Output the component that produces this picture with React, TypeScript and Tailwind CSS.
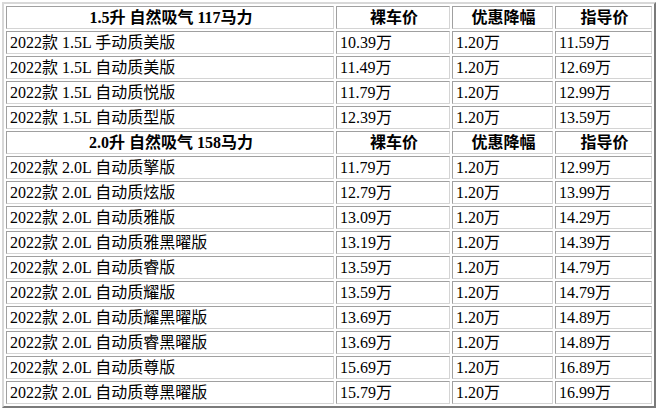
import { Fragment } from 'react';

const groups = [
  {
    title: '1.5升 自然吸气 117马力',
    rows: [
      ['2022款 1.5L 手动质美版', '10.39万', '1.20万', '11.59万'],
      ['2022款 1.5L 自动质美版', '11.49万', '1.20万', '12.69万'],
      ['2022款 1.5L 自动质悦版', '11.79万', '1.20万', '12.99万'],
      ['2022款 1.5L 自动质型版', '12.39万', '1.20万', '13.59万'],
    ],
  },
  {
    title: '2.0升 自然吸气 158马力',
    rows: [
      ['2022款 2.0L 自动质擎版', '11.79万', '1.20万', '12.99万'],
      ['2022款 2.0L 自动质炫版', '12.79万', '1.20万', '13.99万'],
      ['2022款 2.0L 自动质雅版', '13.09万', '1.20万', '14.29万'],
      ['2022款 2.0L 自动质雅黑曜版', '13.19万', '1.20万', '14.39万'],
      ['2022款 2.0L 自动质睿版', '13.59万', '1.20万', '14.79万'],
      ['2022款 2.0L 自动质耀版', '13.59万', '1.20万', '14.79万'],
      ['2022款 2.0L 自动质耀黑曜版', '13.69万', '1.20万', '14.89万'],
      ['2022款 2.0L 自动质睿黑曜版', '13.69万', '1.20万', '14.89万'],
      ['2022款 2.0L 自动质尊版', '15.69万', '1.20万', '16.89万'],
      ['2022款 2.0L 自动质尊黑曜版', '15.79万', '1.20万', '16.99万'],
    ],
  },
];

const cell =
  'h-[23px] border border-t-[#a0a0a0] border-l-[#a0a0a0] border-b-[#d4d4d4] border-r-[#d4d4d4] py-px pl-[3px] pr-px leading-[19px] whitespace-nowrap';

export default function App() {
  return (
    <div className="bg-white p-[2px] text-[16px] text-black [font-family:'Liberation_Serif','Noto_Sans_CJK_SC',serif]">
      <table className="table-fixed w-[654px] border-separate border-spacing-[2px] border-2 border-t-[#d8d8d8] border-l-[#d8d8d8] border-b-[#7a7a7a] border-r-[#7a7a7a]">
        <colgroup>
          <col className="w-[328px]" />
          <col className="w-[114px]" />
          <col className="w-[101px]" />
          <col className="w-[97px]" />
        </colgroup>
        <tbody>
          {groups.map((g) => (
            <Fragment key={g.title}>
              <tr>
                <th className={cell + ' text-center font-bold'}>{g.title}</th>
                <th className={cell + ' text-center font-bold'}>裸车价</th>
                <th className={cell + ' text-center font-bold'}>优惠降幅</th>
                <th className={cell + ' text-center font-bold'}>指导价</th>
              </tr>
              {g.rows.map((r) => (
                <tr key={r[0]}>
                  {r.map((v, i) => (
                    <td key={i} className={cell + ' text-left'}>
                      {v}
                    </td>
                  ))}
                </tr>
              ))}
            </Fragment>
          ))}
        </tbody>
      </table>
    </div>
  );
}
